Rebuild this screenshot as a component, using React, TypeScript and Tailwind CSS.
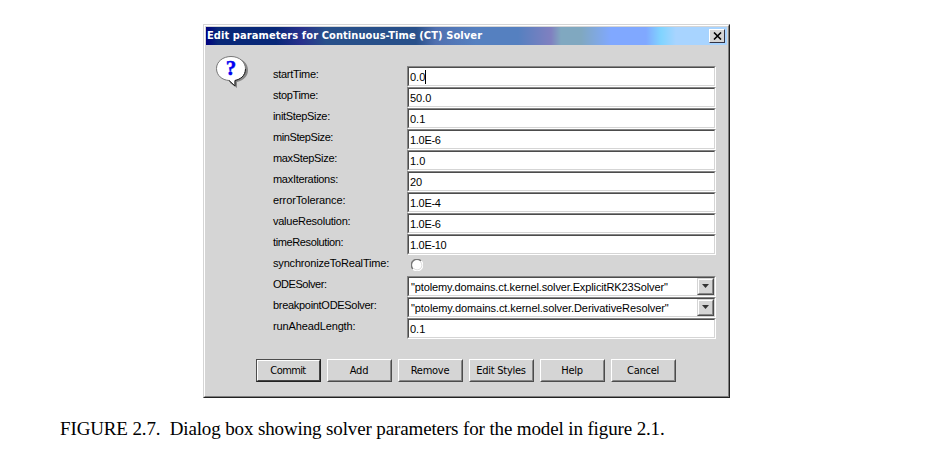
import React from "react";

type Row = { label: string; labelClass: string; value?: string; valueClass?: string; kind: "text" | "radio" | "select"; caret?: boolean };

const rows: Row[] = [
  { label: "startTime:", labelClass: "tracking-[-0.3px]", value: "0.0", kind: "text", caret: true },
  { label: "stopTime:", labelClass: "tracking-[-0.33px]", value: "50.0", kind: "text" },
  { label: "initStepSize:", labelClass: "tracking-[-0.33px]", value: "0.1", kind: "text" },
  { label: "minStepSize:", labelClass: "tracking-[-0.4px]", value: "1.0E-6", valueClass: "tracking-[-0.3px]", kind: "text" },
  { label: "maxStepSize:", labelClass: "tracking-[-0.33px]", value: "1.0", kind: "text" },
  { label: "maxIterations:", labelClass: "tracking-[-0.3px]", value: "20", kind: "text" },
  { label: "errorTolerance:", labelClass: "tracking-[-0.1px]", value: "1.0E-4", valueClass: "tracking-[-0.3px]", kind: "text" },
  { label: "valueResolution:", labelClass: "tracking-[-0.25px]", value: "1.0E-6", valueClass: "tracking-[-0.3px]", kind: "text" },
  { label: "timeResolution:", labelClass: "tracking-[-0.38px]", value: "1.0E-10", valueClass: "tracking-[-0.3px]", kind: "text" },
  { label: "synchronizeToRealTime:", labelClass: "tracking-[-0.18px]", kind: "radio" },
  { label: "ODESolver:", labelClass: "tracking-[-0.45px]", value: '"ptolemy.domains.ct.kernel.solver.ExplicitRK23Solver"', valueClass: "tracking-[-0.12px]", kind: "select" },
  { label: "breakpointODESolver:", labelClass: "tracking-[-0.3px]", value: '"ptolemy.domains.ct.kernel.solver.DerivativeResolver"', valueClass: "tracking-[-0.08px]", kind: "select" },
  { label: "runAheadLength:", labelClass: "tracking-[-0.13px]", value: "0.1", kind: "text" },
];

const buttons = ["Commit", "Add", "Remove", "Edit Styles", "Help", "Cancel"];

function QuestionIcon() {
  return (
    <svg width="32" height="32" viewBox="0 0 32 32">
      <path d="M18 2C27 2 32 8 32 14C32 20 28 24 21 26V32L14 27Z" fill="#868686" />
      <path d="M15 .5C23.5.5 29.5 6 29.5 13S24 23.5 19 24.5V30L13 24.5C6 24 .5 19.5 .5 12.5S7 .5 15 .5Z" fill="#fff" stroke="#777" />
      <path d="M29.5 13C29.5 20 24 23.5 19 24.5V30L13 24.5" fill="none" stroke="#222" />
      <text x="15" y="19" textAnchor="middle" fontFamily="Liberation Serif, serif" fontWeight="bold" fontSize="21" fill="#0000f0" stroke="#0000f0" strokeWidth=".4">?</text>
    </svg>
  );
}

function Radio() {
  return (
    <svg className="ml-1 mt-[4px]" width="12" height="12" viewBox="0 0 12 12">
      <circle cx="6" cy="6" r="5" fill="#fff" />
      <path d="M2 10A5.5 5.5 0 0 1 10 2" fill="none" stroke="#777" strokeWidth="1.4" />
      <path d="M10 2A5.5 5.5 0 0 1 2 10" fill="none" stroke="#fff" strokeWidth="1.4" />
      <path d="M9.5 3A4.5 4.5 0 0 1 3 9.5" fill="none" stroke="#d5d5d5" strokeWidth=".8" />
    </svg>
  );
}

function Field({ row }: { row: Row }) {
  return (
    <div className="h-[21px] w-[309px] border border-b-white border-l-[#868686] border-r-white border-t-[#868686]">
      <div className="flex h-[19px] border border-b-[#d5d5d5] border-l-[#4c4c4c] border-r-[#d5d5d5] border-t-[#4c4c4c] bg-white">
        <span className={"grow whitespace-pre pt-[3px] text-[11px] leading-[13px] " + (row.kind === "select" ? "pl-[2px]" : "pl-px")}>
          <span className={row.valueClass}>{row.value}</span>
          {row.caret && <span className="-mt-px inline-block h-[14px] w-px bg-black align-top" />}
        </span>
        {row.kind === "select" && (
          <span className="flex h-[17px] w-[17px] justify-center border border-b-[#4c4c4c] border-l-[#d5d5d5] border-r-[#4c4c4c] border-t-[#d5d5d5] bg-[#d5d5d5]">
            <span className="flex h-[15px] w-[15px] justify-center border border-b-[#868686] border-l-white border-r-[#868686] border-t-white pt-[4px]">
              <svg width="7" height="4" viewBox="0 0 7 4"><path d="M0 0H7L3.5 4Z" fill="#333" /></svg>
            </span>
          </span>
        )}
      </div>
    </div>
  );
}

export default function App() {
  return (
    <main className="h-[457px] w-[938px] overflow-hidden bg-white pt-[24px] font-['Liberation_Sans',sans-serif] text-black">
      <section className="ml-[203px] h-[374px] w-[527px] border border-b-[#222] border-l-[#d5d5d5] border-r-[#222] border-t-[#d5d5d5] bg-[#d5d5d5]">
        <div className="h-[372px] border border-b-[#808080] border-l-white border-r-[#808080] border-t-white p-px">
          <header className="flex h-[18px] items-start justify-between bg-[linear-gradient(90deg,#000080_0,#082878_12px,#082878_70px,#28308c_95px,#28508a_120px,#28508a_210px,#5070b0_230px,#5580c0_270px,#5580c0_312px,#8080c0_345px,#80a8c0_355px,#80a8c0_375px,#80a8ff_405px,#80a8ff_440px,#80d4ff_455px,#a8d4ff_470px,#a8d4ff_100%)] pl-px pt-[2px]">
            <span className="whitespace-nowrap font-['DejaVu_Sans_Condensed','DejaVu_Sans',sans-serif] text-[11px] font-bold leading-[14px] tracking-[0.09px] text-white">Edit parameters for Continuous-Time (CT) Solver</span>
            <span className="mr-[2px] flex h-[14px] w-[16px] justify-center border border-b-[#334] border-l-white border-r-[#334] border-t-white bg-[#d5d5d5] pt-[2px]">
              <svg width="9" height="8" viewBox="0 0 9 8"><path d="M1 0.5L8 7.5M8 .5L1 7.5" stroke="#000" strokeWidth="1.6" /></svg>
            </span>
          </header>
          <div className="flex pl-[10px] pt-[11px]">
            <div className="w-[57px]"><QuestionIcon /></div>
            <div className="pt-[10px]">
              {rows.map((row) => (
                <div key={row.label} className="flex h-[21px]">
                  <span className="w-[134px] whitespace-nowrap pt-[2px] text-[11px] leading-[13px]"><span className={row.labelClass}>{row.label}</span></span>
                  {row.kind === "radio" ? <Radio /> : <Field row={row} />}
                </div>
              ))}
            </div>
          </div>
          <footer className="flex gap-[6px] pl-[50px] pt-[20px]">
            {buttons.map((b, i) => (
              <div key={b} className={"h-[23px] w-[65px] border " + (i === 0 ? "border-b-[#222] border-l-[#4c4c4c] border-r-[#222] border-t-[#4c4c4c]" : "border-b-[#4c4c4c] border-l-white border-r-[#4c4c4c] border-t-white")}>
                <div className={"h-[21px] border pr-px pt-[3px] text-center font-['DejaVu_Sans_Condensed','DejaVu_Sans',sans-serif] text-[11px] leading-[14px] " + (i === 0 ? "border-b-[#444] border-l-white border-r-[#444] border-t-white tracking-[-0.6px]" : "border-b-[#868686] border-l-[#d5d5d5] border-r-[#868686] border-t-[#d5d5d5] tracking-[-0.25px]")}>{b}</div>
              </div>
            ))}
          </footer>
        </div>
      </section>
      <p className="ml-[60px] mt-[20px] whitespace-pre font-['Liberation_Serif',serif] text-[19px] leading-[22px] tracking-[-0.13px]">FIGURE 2.7.  Dialog box showing solver parameters for the model in figure 2.1.</p>
    </main>
  );
}
